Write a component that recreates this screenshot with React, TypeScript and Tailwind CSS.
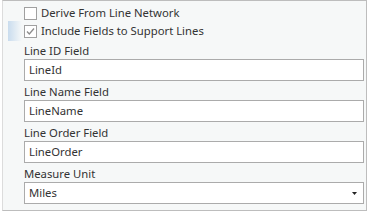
import React from "react";

const fields = [
  { label: "Line ID Field", value: "LineId" },
  { label: "Line Name Field", value: "LineName" },
  { label: "Line Order Field", value: "LineOrder" },
];

function CheckRow({ label, checked, hot }: { label: string; checked?: boolean; hot?: boolean }) {
  return (
    <div className="flex h-[18px] items-center">
      <div className="flex h-[20px] w-[21px] items-stretch pl-[5px]">
        {hot && <div className="w-[14px] bg-gradient-to-r from-[#c9dcee] to-[#f6f8f8]" />}
      </div>
      <div className="flex h-[13px] w-[13px] items-center justify-center border border-[#a0a0a0] bg-white">
        {checked && (
          <svg width="11" height="11" viewBox="0 0 11 11">
            <path d="M2 5.5 L4.3 8 L9 2.5" fill="none" stroke="#8c8c8c" strokeWidth="1.3" />
          </svg>
        )}
      </div>
      <span className="ml-[4px] text-[11.3px] leading-[18px] text-[#333]">{label}</span>
    </div>
  );
}

export default function App() {
  return (
    <div className="h-[212px] w-[367px] bg-white" style={{ fontFamily: '"Noto Sans", "Open Sans", sans-serif' }}>
      <div className="ml-[2px] flex h-[211px] w-[365px] flex-col border border-l-[#dcdcdc] border-t-[#bdbdbd] border-r-[#bdbdbd] border-b-[#bdbdbd] bg-[#f6f8f8] pt-[3px]">
        <CheckRow label="Derive From Line Network" />
        <CheckRow label="Include Fields to Support Lines" checked hot />
        <div className="flex flex-col pl-[21px] pr-[2px]">
          {fields.map((f) => (
            <div key={f.label} className="flex flex-col">
              <div className="h-[19px] pt-[1px] text-[11.3px] leading-[19px] text-[#333]">{f.label}</div>
              <div className="flex h-[22px] items-center border border-[#ababab] bg-white pl-[4px] text-[11.3px] text-[#333]">
                {f.value}
              </div>
            </div>
          ))}
          <div className="h-[19px] pt-[1px] text-[11.3px] leading-[19px] text-[#333]">Measure Unit</div>
          <div className="flex h-[22px] items-center justify-between border border-[#ababab] bg-white pl-[4px] pr-[6px] text-[11.3px] text-[#333]">
            <span>Miles</span>
            <svg width="5" height="3" viewBox="0 0 5 3">
              <path d="M0 0 H5 L2.5 3 Z" fill="#222" />
            </svg>
          </div>
        </div>
      </div>
    </div>
  );
}
